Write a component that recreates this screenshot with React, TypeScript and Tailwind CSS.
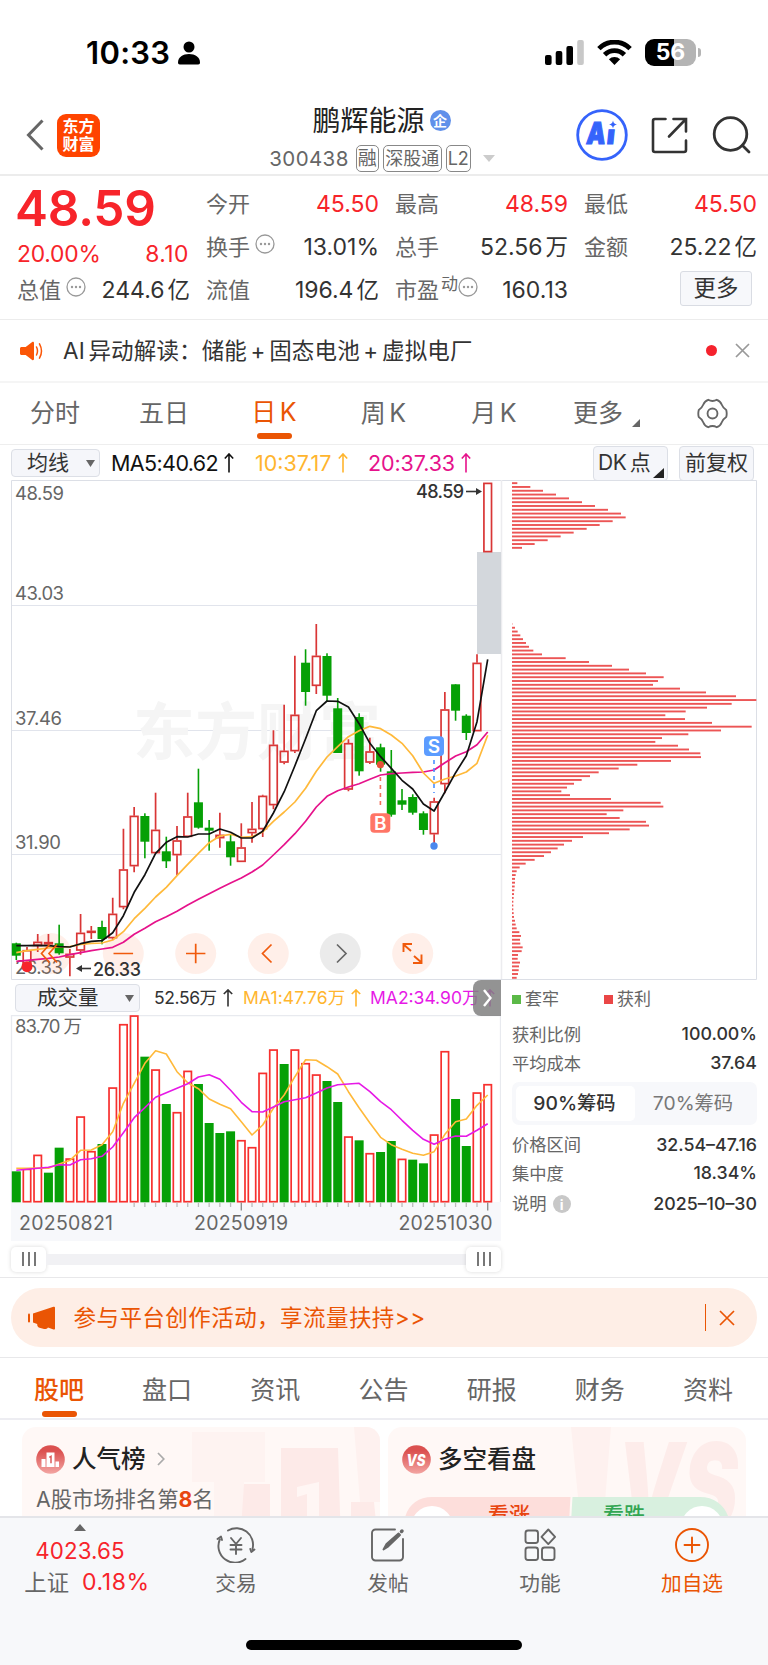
import React from "react";

/* ---------- data ---------- */

type Candle = [up: 0 | 1, high: number, top: number, bottom: number, low: number];

const candles: Candle[] = [
  [0, 942.7, 943.3, 955.7, 960], [1, 947, 950, 967, 967], [1, 934, 941.7, 946, 952], [1, 934, 942, 944.5, 946.7],
  [0, 924.7, 943.3, 953.3, 954.7], [1, 949, 953.7, 957.7, 976.3], [1, 914, 932.7, 950.7, 954.7], [1, 926, 930.7, 933, 939],
  [0, 920.7, 927, 939, 944.3], [1, 897.7, 913.7, 938.3, 940], [1, 828.7, 869.3, 907.3, 909.3], [1, 807, 815.7, 866.3, 872.3],
  [0, 813.3, 816, 841.7, 858.3], [1, 792.7, 829.7, 853.3, 853.3], [0, 836.7, 851.3, 861.3, 868], [1, 826, 840.3, 855.3, 875],
  [1, 792.7, 816.3, 837, 837], [0, 768.7, 802.3, 827.7, 828.7], [0, 820, 827.7, 830.7, 850.7], [1, 812.7, 834.7, 838.3, 847.7],
  [0, 835, 841.3, 857.3, 865.7], [1, 823.3, 847.3, 862, 862], [1, 802, 828.7, 833.3, 842.7], [1, 794.7, 795.7, 829.3, 837],
  [1, 730.3, 744.7, 805.3, 809.3], [1, 704.7, 750.7, 762.7, 764.3], [1, 655.7, 714.7, 751.3, 753], [0, 649.3, 662.7, 692, 705.7],
  [1, 624, 655.7, 686, 694], [0, 653.3, 656, 695.7, 701], [0, 698, 708.3, 753, 753], [1, 739.3, 743, 789.7, 791.3],
  [0, 713.3, 717, 771.3, 775.7], [1, 737.7, 751.3, 762.7, 764], [0, 743.7, 747.3, 764.7, 771.7], [0, 750, 771.3, 814.7, 816.7],
  [0, 789, 800.3, 804.7, 810], [0, 794.3, 797, 812.7, 814.7], [0, 811.3, 813.3, 830, 834.7], [1, 797.7, 801.3, 834.3, 846],
  [1, 692, 709.3, 784.3, 793.3], [0, 684.3, 684.3, 710.7, 720.7], [0, 714.3, 715.7, 733, 740], [1, 654.3, 662.7, 731.3, 731.3],
  [1, 482.7, 482.7, 552.3, 552.3],
];

const ma5 = [945.7, 945.7, 945.3, 945.7, 946.7, 947, 943.7, 941.3, 940.7, 932.7, 915.7, 892.3, 874.7, 853.3, 842.3, 836.7, 837, 834, 834, 829, 832.3, 838, 838, 831.3, 813, 791.7, 765.7, 738.7, 710.7, 701, 701.3, 707, 723.7, 743.3, 756.7, 768.3, 780.3, 789, 804, 811, 792, 772.7, 755.7, 721.7, 659.3];
const ma10 = [952.7, 950.7, 949.3, 948, 947, 946.7, 944.3, 943.3, 943, 940, 931.7, 918.7, 908.3, 897, 887.3, 875.7, 864.3, 853.3, 842.7, 836, 834.3, 837.3, 836.7, 832, 821.3, 812, 802, 788.3, 771.3, 757, 746.7, 736.7, 730.7, 726.3, 728.7, 735, 743.3, 755.7, 773, 783.3, 779, 776, 772, 763.3, 735.3];
const ma20 = [961.3, 960.3, 959.3, 958.3, 957, 954.7, 952.7, 950.7, 949, 947.3, 942.3, 934.3, 928.3, 921.7, 916.7, 911.3, 905, 899.3, 893.7, 888.3, 883, 878, 872, 865, 855, 844.7, 833.7, 821.3, 807, 796.3, 790.7, 787, 783.7, 779.3, 775, 773.7, 773, 772.3, 772, 770, 762.7, 756, 751.7, 744.7, 732];

const volumeUp = [0, 1, 1, 0, 0, 1, 1, 1, 0, 1, 1, 1, 0, 1, 0, 1, 1, 0, 0, 0, 0, 1, 1, 1, 1, 0, 1, 1, 1, 0, 0, 1, 0, 1, 0, 0, 1, 0, 0, 1, 1, 0, 0, 1, 1];
const volumeTop = [589, 582, 540, 593, 518, 551, 425, 529, 507, 338, 148, 122, 245, 284, 387, 412, 288, 327, 444, 474, 469, 496, 517, 294, 224, 267, 224, 265, 299, 318, 381, 485, 496, 535, 531, 498, 552, 554, 565, 479, 229, 372, 513, 353, 328];
const volMa1 = [580, 580, 579, 580, 567, 556, 526, 525, 509, 470, 385, 325, 265, 227, 237, 290, 323, 341, 372, 388, 401, 440, 480, 450, 400, 360, 305, 254, 256, 275, 297, 350, 398, 444, 487, 509, 523, 535, 541, 530, 478, 440, 432, 391, 360];
const volMa2 = [586, 583, 580, 577, 569, 570, 554, 551, 544, 516, 473, 428, 398, 367, 353, 340, 326, 306, 299, 313, 346, 382, 410, 411, 396, 380, 374, 368, 354, 339, 329, 327, 325, 350, 380, 404, 436, 466, 493, 508, 493, 483, 484, 466, 446];

const chipsTop = [16, 55, 93, 132, 171, 210, 249, 288, 327, 341, 302, 263, 224, 185, 146, 107, 68, 30];
const chipsMain = [1, 9, 17, 25, 33, 42, 51, 64, 90, 161, 231, 300, 351, 402, 455, 438, 423, 504, 582, 672, 733, 659, 585, 521, 460, 519, 600, 719, 627, 529, 450, 430, 498, 531, 565, 567, 477, 376, 320, 260, 234, 209, 186, 165, 148, 174, 297, 446, 454, 334, 284, 323, 402, 411, 353, 291, 213, 180, 156, 137, 117, 96, 68, 41, 23, 14, 11, 9, 9, 8, 7, 6, 5, 4, 4, 4, 5, 6, 9, 11, 14, 22, 27, 24, 25, 32, 29, 18, 17, 24, 21, 20, 18, 14];

const cx = (i: number) => 16.3 + i * 10.714;
const line = (ys: number[], f: (y: number) => number = (y) => y) =>
  ys.map((y, i) => `${cx(i).toFixed(1)},${f(y).toFixed(1)}`).join(" ");

/* ---------- small pieces ---------- */

const Dots = ({ className = "" }: { className?: string }) => (
  <svg className={`h-5 w-5 shrink-0 ${className}`} viewBox="0 0 20 20" fill="none" stroke="#999" strokeWidth="1.3">
    <circle cx="10" cy="10" r="9" />
    <g fill="#999" stroke="none">
      <circle cx="6" cy="10" r="1.2" />
      <circle cx="10" cy="10" r="1.2" />
      <circle cx="14" cy="10" r="1.2" />
    </g>
  </svg>
);

const Up = ({ className = "" }: { className?: string }) => (
  <svg className={`h-5 w-2.5 shrink-0 ${className}`} viewBox="0 0 10 20" fill="none" stroke="currentColor" strokeWidth="1.6">
    <path d="M5 19.500V1M0.800 5.500L5 1l4.200 4.500" />
  </svg>
);

const Caret = ({ className = "" }: { className?: string }) => (
  <svg className={`h-[7px] w-[9px] shrink-0 ${className}`} viewBox="0 0 9 7">
    <path d="M0 0h9L4.500 7z" fill="#666" />
  </svg>
);

const Cell = ({ label, value, unit, red, dots }: { label: React.ReactNode; value: string; unit?: string; red?: boolean; dots?: boolean }) => (
  <div className="flex h-[43px] items-center justify-between">
    <span className="flex items-center text-[22px] text-[#666]">
      {label}
      {dots && <Dots className="mb-2 ml-[5px]" />}
    </span>
    <span className={red ? "-mr-px text-[23px] text-[#f7242a]" : "-mr-px text-[23px] text-[#333]"}>
      {value}
      {unit && <span className="ml-[3px] text-[22.5px]">{unit}</span>}
    </span>
  </div>
);

const StatusBar = () => (
  <div className="flex h-[90px] items-start justify-between pl-[86px] pr-[67px] pt-[38px]">
    <div className="flex h-[30px] items-center gap-[8px]">
      <span className="text-[31px] font-semibold tracking-[0.300px] text-black">10:33</span>
      <svg width="22" height="24" viewBox="0 0 22 24">
        <circle cx="11" cy="6" r="5.500" />
        <path d="M0 21.500C0 16 5 13 11 13s11 3 11 8.500c0 1.300-.6 2-1.800 2H1.800C.6 23.500 0 22.800 0 21.500z" />
      </svg>
    </div>
    <div className="-mt-px flex h-[30px] items-center">
      <svg width="39" height="25" viewBox="0 0 39 25">
        <rect x="0" y="15" width="6.600" height="10" rx="2" />
        <rect x="10.700" y="11" width="6.600" height="14" rx="2" />
        <rect x="21.400" y="6" width="6.600" height="19" rx="2" />
        <rect x="32.200" y="0" width="6.600" height="25" rx="2" fill="#c8c8c8" />
      </svg>
      <svg className="ml-[13px]" width="35" height="25" viewBox="0 0 35 25" fill="none" stroke="#000" strokeWidth="4.800">
        <path d="M1.900 8.600a22 22 0 0 1 31.200 0" />
        <path d="M7.600 14.800a14 14 0 0 1 19.800 0" />
        <path d="M17.500 25l-5.600-5.800a8 8 0 0 1 11.200 0z" fill="#000" stroke="none" />
      </svg>
      <div className="ml-[13px] flex h-[27px] w-[51px] items-center justify-center rounded-[9px] bg-[linear-gradient(90deg,#000_57%,#b4b4b4_57%)] text-[23px] font-bold text-white">56</div>
      <div className="ml-[2px] h-[9px] w-[3px] rounded-r-full bg-[#b4b4b4]" />
    </div>
  </div>
);

const Header = () => (
  <div className="flex h-[86px] items-center justify-between border-b-2 border-[#ececec] pl-[26px] pr-[17px] pt-[6px]">
    <div className="flex w-[200px] items-center">
      <svg width="18" height="32" viewBox="0 0 18 32" fill="none" stroke="#666" strokeWidth="3">
        <path d="M16.500 1.500L2.500 16l14 14.500" />
      </svg>
      <div className="ml-[13px] flex h-[43px] w-[43px] flex-col items-center justify-center rounded-[9px] bg-[#ff4400] text-[16px] font-bold leading-[18px] text-white">
        <span>东方</span>
        <span>财富</span>
      </div>
    </div>
    <div className="flex flex-col items-center pr-[17px] pt-[9px]">
      <div className="flex h-[38px] items-center gap-[5px] pl-[3px]">
        <span className="text-[28px] text-[#222]">鹏辉能源</span>
        <span className="flex h-[21px] w-[21px] items-center justify-center rounded-full bg-[#6090ea] text-[14px] font-bold text-white">企</span>
      </div>
      <div className="flex h-[38px] items-center gap-[5px] pl-[4px] text-[20px] leading-[24px] text-[#666]">
        <span className="mr-[2px] text-[20.500px] tracking-[0.400px]">300438</span>
        <span className="flex h-[27px] w-[23px] items-center justify-center rounded-[5px] border border-[#888] text-[19px]">融</span>
        <span className="-ml-px flex h-[27px] w-[59px] items-center justify-center rounded-[5px] border border-[#888] text-[18px]">深股通</span>
        <span className="-ml-px flex h-[27px] w-[25px] items-center justify-center rounded-[5px] border border-[#888] text-[18px]">L2</span>
        <svg className="ml-[7px]" width="12" height="7" viewBox="0 0 12 7">
          <path d="M0 0h12L6 7z" fill="#ccc" />
        </svg>
      </div>
    </div>
    <div className="flex w-[200px] items-center justify-end">
      <svg width="52" height="52" viewBox="0 0 52 52">
        <circle cx="26" cy="26" r="24.300" fill="none" stroke="#3563fb" strokeWidth="2.800" />
        <g fontSize="30" fontWeight="900" fill="#3563fb" stroke="#3563fb" strokeWidth="1.200" transform="translate(3.500 0) skewX(-6)">
          <text x="10" y="35.300" textLength="19" lengthAdjust="spacingAndGlyphs">A</text>
          <text x="30.500" y="35.300" fontSize="26">ı</text>
        </g>
        <path d="M37 11.500c.6 2.600 1.400 3.400 4 4-2.600.6-3.400 1.400-4 4-.6-2.600-1.400-3.400-4-4 2.600-.6 3.400-1.400 4-4z" fill="#3563fb" />
      </svg>
      <svg className="ml-[23px]" width="37" height="37" viewBox="0 0 37 37" fill="none" stroke="#333" strokeWidth="2.600" strokeLinecap="round">
        <path d="M14.500 2H4a2 2 0 0 0-2 2v29a2 2 0 0 0 2 2h29a2 2 0 0 0 2-2V23.500" />
        <path d="M22.500 2H35v12.500M34 3L18 19.500" />
      </svg>
      <svg className="ml-[24px]" width="39" height="38" viewBox="0 0 39 38" fill="none" stroke="#333" strokeWidth="2.800" strokeLinecap="round">
        <circle cx="18.500" cy="18" r="16.300" />
        <path d="M30.500 29.500l6.500 6.500" />
      </svg>
    </div>
  </div>
);

const Quote = () => (
  <div className="flex h-[144px] gap-[17px] border-b border-[#ececec] pl-[17px] pr-[12px] pt-[7px]">
    <div className="w-[172px]">
      <div className="-ml-[2px] flex h-[50px] items-center text-[49.500px] font-semibold tracking-[-0.200px] text-[#f7242a]">48.59</div>
      <div className="flex h-[42px] items-center justify-between text-[22.800px] tracking-[-0.200px] text-[#f7242a]">
        <span>20.00%</span>
        <span className="tracking-[0.500px]">8.10</span>
      </div>
      <div className="-mt-[6px]">
        <Cell label="总值" value="244.6" unit="亿" dots />
      </div>
    </div>
    <div className="w-[172px]">
      <Cell label="今开" value="45.50" red />
      <Cell label="换手" value="13.01%" dots />
      <Cell label="流值" value="196.4" unit="亿" />
    </div>
    <div className="w-[172px]">
      <Cell label="最高" value="48.59" red />
      <Cell label="总手" value="52.56" unit="万" />
      <Cell
        label={<>市盈<span className="mb-3 ml-[2px] text-[17px]">动</span><Dots className="mb-2" /></>}
        value="160.13"
      />
    </div>
    <div className="w-[172px]">
      <Cell label="最低" value="45.50" red />
      <Cell label="金额" value="25.22" unit="亿" />
      <div className="flex h-[38px] items-center justify-end pr-[4px]">
        <span className="flex h-[35px] w-[72px] items-center justify-center rounded-[3px] border border-[#d9dce3] bg-[#f7f8fb] text-[22.500px] text-[#333]">更多</span>
      </div>
    </div>
  </div>
);

const News = () => (
  <div className="flex h-[63px] items-center border-b-2 border-[#f5f5f5] pl-[20px] pr-[18px]">
    <svg width="24" height="20" viewBox="0 0 24 20">
      <path d="M1.500 6h4.200l6.500-5c.8-.6 1.800-.1 1.800.9v16.200c0 1-1 1.500-1.800.9L5.700 14H1.500C.7 14 0 13.400 0 12.500v-5C0 6.600.7 6 1.500 6z" fill="#fb5607" />
      <path d="M16.500 6q2 4 0 8M19.500 2.800q4 7.200 0 14.400" fill="none" stroke="#fb5607" strokeWidth="1.500" strokeLinecap="round" />
    </svg>
    <span className="ml-[19px] text-[22.500px] tracking-[0.150px] [word-spacing:-2.900px] text-[#333]">AI 异动解读：储能 + 固态电池 + 虚拟电厂</span>
    <span className="ml-auto h-[11px] w-[11px] rounded-full bg-[#f5222d]" />
    <svg className="ml-[18px]" width="15" height="15" viewBox="0 0 15 15" stroke="#999" strokeWidth="1.700">
      <path d="M1 1l13 13M14 1L1 14" />
    </svg>
  </div>
);

const PeriodTabs = () => (
  <div className="flex h-[62px] items-center border-b border-[#eee] text-[25px] text-[#666]">
    <span className="w-[109px] pl-[30px]">分时</span>
    <span className="w-[110px] pl-[30px]">五日</span>
    <div className="flex h-full w-[110px] flex-col items-center pt-[11px] text-[#ea5504]">
      <span className="[word-spacing:-3.500px]">日 K</span>
      <span className="mt-px h-[6px] w-[35px] shrink-0 rounded-full bg-[#ea5504]" />
    </div>
    <span className="w-[109px] text-center [word-spacing:-3.500px]">周 K</span>
    <span className="w-[112px] text-center [word-spacing:-3.500px]">月 K</span>
    <span className="flex items-center pl-[23px]">
      更多
      <svg className="ml-[9px] mt-[18px]" width="8" height="8" viewBox="0 0 8 8">
        <path d="M8 0v8H0z" fill="#666" />
      </svg>
    </span>
    <svg className="ml-[57px]" width="31" height="31" viewBox="0 0 30 30" fill="none" stroke="#666" strokeWidth="1.800" strokeLinejoin="round">
      <path d="M10.800 1.700Q15 4.200 19.200 1.700Q22.600 2.900 24 6.500Q25.200 9.600 28.300 11.600Q29.200 15 28.300 18.400Q25.200 20.400 24 23.500Q22.600 27.100 19.200 28.300Q15 25.800 10.800 28.300Q7.400 27.100 6 23.500Q4.800 20.400 1.700 18.400Q0.800 15 1.700 11.600Q4.800 9.600 6 6.500Q7.400 2.900 10.800 1.700z" />
      <circle cx="15" cy="15" r="4.800" />
    </svg>
  </div>
);

const MaRow = () => (
  <div className="flex h-[34px] items-center pl-[11px] pr-[14px] pt-[2px] text-[21.500px]">
    <div className="flex h-[28px] w-[89px] items-center justify-between rounded-[4px] border border-[#dcdfe6] bg-[#f5f6fa] pl-[15px] pr-[4px] text-[21px] text-[#333]">
      均线
      <Caret />
    </div>
    <span className="ml-[11px] flex w-[144px] items-center gap-[6px] text-[#111]"><span className="tracking-[-0.600px]">MA5:40.62</span><Up /></span>
    <span className="flex w-[113px] items-center gap-[6px] text-[#ffb52e]"><span>10:37.17</span><Up /></span>
    <span className="flex items-center gap-[6px] text-[#e6128b]"><span className="tracking-[-0.100px]">20:37.33</span><Up /></span>
    <div className="ml-auto flex h-[35px] w-[75px] items-center rounded-[4px] border border-[#dcdfe6] bg-[#f5f6fa] pl-[4px] text-[#333]">
      <span className="whitespace-nowrap text-[21px] tracking-[-0.300px] [word-spacing:-2.500px]">DK 点</span>
      <svg className="ml-[3px] mt-[20px] shrink-0" width="11" height="10" viewBox="0 0 11 10">
        <path d="M11 0v10H0z" fill="#222" />
      </svg>
    </div>
    <div className="ml-[11px] flex h-[35px] w-[75px] items-center justify-center rounded-[4px] border border-[#dcdfe6] bg-[#f5f6fa] text-[21px] text-[#333]">前复权</div>
  </div>
);

const Bars = ({ values, start }: { values: number[]; start: number }) => (
  <g fill="#ec5555">
    {values.map((v, k) => (
      <rect key={k} x="512" y={482.2 + (k + start) * 3.805} width={v / 3} height="1.900" />
    ))}
  </g>
);

const PriceChart = () => (
  <svg className="block" width="768" height="501" viewBox="0 479 768 501">
    <g stroke="#e1e4ec" strokeWidth="1" fill="none">
      <path d="M11 605.500H501M11 730.500H501M11 854.500H501" />
      <path d="M11.500 480.500H756.500V979.500H11.500z" stroke="#dcdfe6" />
    </g>
    <path d="M501.500 480V979" stroke="#ececef" strokeWidth="1.500" />
    <text x="133" y="755" fontSize="62" fontWeight="700" fill="#f5f5f5">东方财富</text>
    <g fontSize="18.500" fill="#666">
      <text x="15" y="500" textLength="49">48.59</text>
      <text x="15" y="600" textLength="49">43.03</text>
      <text x="15" y="724.500" textLength="47">37.46</text>
      <text x="15" y="849" textLength="46">31.90</text>
      <text x="15" y="974" textLength="48">26.33</text>
    </g>
    <g fill="#ff7033" fillOpacity="0.110">
      <circle cx="51" cy="953.500" r="20.500" />
      <circle cx="123.300" cy="953.500" r="20.500" />
      <circle cx="195.700" cy="953.500" r="20.500" />
      <circle cx="268.300" cy="953.500" r="20.500" />
      <circle cx="412.700" cy="953.500" r="20.500" />
      <circle cx="340.300" cy="953.500" r="20.500" fill="#000" fillOpacity="0.080" />
    </g>
    <rect x="477" y="552" width="24" height="102" fill="#d3d7dc" />
    {candles.map(([up, h, t, b, l], i) =>
      up ? (
        <g key={i} stroke="#d93636" strokeWidth="1.700" fill="none">
          <path d={`M${cx(i)} ${h}V${t}M${cx(i)} ${b}V${l}`} />
          <rect x={cx(i) - 3.8} y={t + 0.7} width="7.600" height={Math.max(b - t - 1.4, 0.8)} />
        </g>
      ) : (
        <g key={i} fill="#06a006">
          <rect x={cx(i) - 0.8} y={h} width="1.600" height={l - h} />
          <rect x={cx(i) - 4.5} y={t} width="9" height={b - t} />
        </g>
      )
    )}
    <g fill="none" strokeWidth="1.700" strokeLinejoin="round">
      <polyline points={line(ma20)} stroke="#e6128b" />
      <polyline points={line(ma10)} stroke="#ffb93a" />
      <polyline points={line(ma5)} stroke="#111" />
    </g>
    <circle cx="27" cy="966.700" r="5.500" fill="#f7242a" />
    <g stroke="#f05a0c" strokeWidth="1.700" fill="none">
      <path d="M49.500 944.500l-8 9 8 9M57 944.500l-8 9 8 9" />
      <path d="M113.500 953.500h19.600M186 953.500h19.400M195.700 943.800v19.400" />
      <path d="M271.500 944.500l-9 9 9 9" />
      <path d="M337 944.500l9 9-9 9" stroke="#666" />
      <path d="M411 951l-8-7M403.500 952v-8h8.500M414 956l8 7M421.500 954.500v8.500h-8.500" strokeWidth="1.900" />
    </g>
    <g strokeWidth="1.600" strokeDasharray="4 4">
      <path d="M380.400 777v32" stroke="#f2705c" />
      <path d="M434 760v33" stroke="#4a90ff" />
    </g>
    <circle cx="380.400" cy="764.700" r="3.600" fill="#e8503a" />
    <circle cx="434" cy="846" r="3.700" fill="#4a88ee" />
    <rect x="370.300" y="813.300" width="20" height="19.500" rx="4" fill="#ff7566" />
    <rect x="424" y="736.300" width="20" height="19.700" rx="4" fill="#5c9cff" />
    <g fontSize="19" fontWeight="600" fill="#fff" textAnchor="middle">
      <text x="380.300" y="830">B</text>
      <text x="434" y="753">S</text>
    </g>
    <g fontSize="18" fontWeight="500" fill="#333">
      <text x="416" y="498" textLength="48">48.59</text>
      <text x="93" y="975.500" textLength="48">26.33</text>
    </g>
    <g stroke="#333" strokeWidth="1.600" fill="#333">
      <path d="M466 491.500h11" />
      <path d="M482 491.500l-6-3.500v7z" strokeWidth="0" />
      <path d="M81 968.500h10" />
      <path d="M76 968.500l6-3.500v7z" strokeWidth="0" />
    </g>
    <Bars values={chipsTop} start={0} />
    <Bars values={chipsMain} start={37} />
  </svg>
);

const vy = (v: number) => 975 + v / 3;

const VolumePanel = () => (
  <div className="w-[501px]">
    <div className="relative flex h-[35px] items-center pl-[15px] pt-px text-[17.500px]">
      <div className="flex h-[28px] w-[125px] items-center justify-between rounded-[4px] border border-[#dcdfe6] bg-[#f5f6fa] pl-[21px] pr-[5px] text-[20.500px] text-[#333]">
        成交量
        <Caret />
      </div>
      <span className="ml-[14px] flex w-[89px] items-center gap-[6px] text-[#333]"><span className="tracking-[-0.400px]">52.56万</span><Up className="scale-y-90" /></span>
      <span className="flex w-[127px] items-center gap-[6px] whitespace-nowrap text-[#ffb52e]"><span className="tracking-[0.100px]">MA1:47.76万</span><Up className="scale-y-90" /></span>
      <span className="flex items-center gap-[6px] whitespace-nowrap text-[#e619e6]"><span>MA2:34.90万</span><Up className="scale-y-90" /></span>
      <div className="absolute right-0 top-0 flex h-[36px] w-[28px] items-center justify-center rounded-l-[8px] bg-[#808080]/85">
        <svg width="9" height="18" viewBox="0 0 9 18" fill="none" stroke="#fff" strokeWidth="2.400">
          <path d="M1 1l6.500 8L1 17" />
        </svg>
      </div>
    </div>
    <svg className="block" width="501" height="226" viewBox="0 1015 501 226">
      <rect x="11" y="1202" width="490" height="39" fill="#f7f8fb" />
      <path d="M11.500 1202V1015.500H500.500V1202" fill="none" stroke="#e8eaef" strokeWidth="1.300" />
      <text x="15" y="1033" fontSize="18.500" fill="#666" textLength="67">83.70 万</text>
      {volumeTop.map((v, i) =>
        volumeUp[i] ? (
          <rect key={i} x={cx(i) - 3.7} y={vy(v) + 0.4} width="7.400" height={1201.3 - vy(v)} fill="#fff" stroke="#f7302e" strokeWidth="1.700" />
        ) : (
          <rect key={i} x={cx(i) - 4.5} y={vy(v)} width="9" height={1202.3 - vy(v)} fill="#06a006" />
        )
      )}
      {volumeTop.map((_, i) =>
        i >= 11 ? <path key={i} d={`M${cx(i)} 1202.500v${i === 21 || i === 44 ? 8 : 4.5}`} stroke={i === 21 || i === 44 ? "#888" : "#bbb"} strokeWidth="1.300" /> : null
      )}
      <g fill="none" strokeWidth="1.600" strokeLinejoin="round">
        <polyline points={line(volMa1, vy)} stroke="#ffb93a" />
        <polyline points={line(volMa2, vy)} stroke="#e619e6" />
      </g>
      <g fontSize="19.500" fill="#666">
        <text x="19" y="1230" textLength="94">20250821</text>
        <text x="194" y="1230" textLength="94">20250919</text>
        <text x="398.500" y="1230" textLength="94">20251030</text>
      </g>
    </svg>
    <div className="flex h-[36px] items-center pl-[11px]">
      <Handle />
      <div className="h-[11px] flex-1 bg-[#f1f1f4]" />
      <Handle />
    </div>
  </div>
);

const Handle = () => (
  <div className="flex h-[25px] w-[35px] items-center justify-center gap-[4px] rounded-[5px] bg-white shadow-[0_0_4px_rgba(0,0,0,0.150)]">
    <span className="h-[14px] w-[2px] bg-[#777]" />
    <span className="h-[14px] w-[2px] bg-[#777]" />
    <span className="h-[14px] w-[2px] bg-[#777]" />
  </div>
);

const Stat = ({ label, value, className }: { label: React.ReactNode; value: string; className: string }) => (
  <div className={`flex items-center justify-between ${className}`}>
    <span className="flex items-center text-[17.300px] text-[#666]">{label}</span>
    <span className="text-[17.800px] font-medium text-[#333]">{value}</span>
  </div>
);

const ChipPanel = () => (
  <div className="ml-[11px] w-[245px] pt-[4px]">
    <div className="flex h-[31px] items-center text-[17px] text-[#666]">
      <span className="h-[9px] w-[9px] bg-[#5bb947]" />
      <span className="ml-[4px] w-[79px]">套牢</span>
      <span className="h-[9px] w-[9px] bg-[#ea4646]" />
      <span className="ml-[4px]">获利</span>
    </div>
    <Stat className="mt-[5px] h-[29px]" label="获利比例" value="100.00%" />
    <Stat className="h-[29px]" label="平均成本" value="37.64" />
    <div className="mt-[4px] flex h-[43px] rounded-[7px] bg-[#f7f8fb] p-[4px] text-[19.300px]">
      <span className="flex w-[119px] items-center justify-center rounded-[5px] bg-white pr-[2px] font-medium text-[#333]">90%筹码</span>
      <span className="flex flex-1 items-center justify-center pr-[2px] text-[#777]">70%筹码</span>
    </div>
    <Stat className="mt-[6px] h-[28px]" label="价格区间" value="32.54–47.16" />
    <Stat className="h-[29px]" label="集中度" value="18.34%" />
    <Stat
      className="h-[32px]"
      label={<>说明<span className="ml-[6px] flex h-[18px] w-[18px] items-center justify-center rounded-full bg-[#c8c8c8] text-[14px] font-bold text-white">i</span></>}
      value="2025–10–30"
    />
  </div>
);

const Banner = () => (
  <div className="h-[81px] border-y-[1.500px] border-[#e8e8ea] px-[11px] pt-[10px]">
    <div className="flex h-[59px] items-center rounded-[30px] bg-[#feeee6] pl-[17px] pr-[22px] text-[#ea5504]">
      <svg width="28" height="24" viewBox="0 0 28 24" fill="#ea5504">
        <rect x="0" y="7.500" width="2" height="9" rx="1" />
        <path d="M5 7.500L25.500 0.800c1-.3 1.500 0 1.500 1v20.600c0 1-.6 1.300-1.500 1L20 21.400c-1 1.400-2.800 2-4.800 1.400l-3.700-1c-1.700-.6-2.500-2-2.300-3.800L5 16.500z" />
      </svg>
      <span className="ml-[17.500px] text-[22.500px] tracking-[0.450px]">参与平台创作活动，享流量扶持&gt;&gt;</span>
      <span className="ml-auto h-[27px] w-[1.500px] bg-[#ea5504]" />
      <svg className="ml-[13px]" width="16" height="16" viewBox="0 0 16 16" stroke="#ea5504" strokeWidth="1.700">
        <path d="M1 1l14 14M15 1L1 15" />
      </svg>
    </div>
  </div>
);

const ContentTabs = () => (
  <div className="flex h-[62px] border-b-2 border-[#ededf2] pl-[5px] text-[25px] text-[#666]">
    <div className="flex w-[108px] flex-col items-center pt-[14px] font-medium text-[#ea5504]">
      <span>股吧</span>
      <span className="mt-px h-[6px] w-[35px] shrink-0 rounded-full bg-[#ea5504]" />
    </div>
    {["盘口", "资讯", "公告", "研报", "财务", "资料"].map((t) => (
      <span key={t} className="w-[108.2px] pt-[14px] text-center">{t}</span>
    ))}
  </div>
);

const Cards = () => (
  <div className="flex h-[96px] gap-[8px] overflow-hidden pl-[22px] pt-[7px]">
    <div className="relative h-[140px] w-[358px] overflow-hidden rounded-[14px] bg-[#fff8f6]">
      <svg className="absolute inset-0" width="358" height="140" viewBox="0 0 358 140">
        <path d="M170 5h73v50h-21v60h-30V55h-22z" fill="#fef3f1" />
        <path d="M332 0h26v75h-20z" fill="#fef1ef" />
        <path d="M222 57h26v60h-30zM259 21h57l3 96h-60zM329 75h23l4 40h-27z" fill="#fdeae8" />
        <path d="M275 60l22-5v50h-12V67l-10 3z" fill="#fff6f4" />
      </svg>
      <div className="relative flex h-[64px] items-center pl-[14px]">
        <svg width="29" height="29" viewBox="0 0 29 29">
          <circle cx="14.500" cy="14.500" r="14.300" fill="url(#badge)" />
          <path d="M5.500 14h4v8h-4zM10.500 7.500h8V22h-8zM19.500 16.500h3.500V22h-3.500z" fill="#fff" />
          <path d="M13.300 12.300l1.700-1v7" stroke="#dc5a58" strokeWidth="1.500" fill="none" />
          <defs>
            <linearGradient id="badge" x1="0" y1="0" x2="0" y2="1">
              <stop offset="0.200" stopColor="#db5150" />
              <stop offset="1" stopColor="#f3a5a2" />
            </linearGradient>
          </defs>
        </svg>
        <span className="ml-[7px] text-[24.500px] font-medium text-[#222]">人气榜</span>
        <svg className="ml-[11px]" width="8" height="14" viewBox="0 0 8 14" fill="none" stroke="#aaa" strokeWidth="1.700">
          <path d="M1 1l5.800 6L1 13" />
        </svg>
      </div>
      <div className="relative -mt-[7px] pl-[14px] text-[21.300px] leading-[30px] text-[#666]">
        A股市场排名第<span className="font-bold text-[#e8450f]">8</span>名
      </div>
    </div>
    <div className="relative h-[140px] w-[358px] overflow-hidden rounded-[14px] bg-[#fff8f6]">
      <svg className="absolute inset-0" width="358" height="140" viewBox="0 0 358 140">
        <path d="M183 0h40l-8 100h-22z" fill="#fef1ef" />
        <text x="229" y="101" fontSize="118" fontWeight="900" fontStyle="italic" fill="#fdecea" textLength="121" lengthAdjust="spacingAndGlyphs">VS</text>
      </svg>
      <div className="relative flex h-[64px] items-center pl-[14px]">
        <svg width="29" height="29" viewBox="0 0 29 29">
          <circle cx="14.500" cy="14.500" r="14.300" fill="url(#badge)" />
          <text x="14" y="20.500" fontSize="16.500" fontWeight="800" fontStyle="italic" fill="#fff" textAnchor="middle" textLength="19" lengthAdjust="spacingAndGlyphs">VS</text>
        </svg>
        <span className="ml-[7px] text-[24.500px] font-medium text-[#222]">多空看盘</span>
      </div>
      <svg className="absolute left-[16px] top-[69px]" width="326" height="60" viewBox="0 0 326 60">
        <path d="M0 30C0 12 12 1 28 1H166.500L163 60H0z" fill="#fddedb" />
        <path d="M168.500 1H296C314 1 326 14 326 32V60H165z" fill="#d8f0df" />
        <circle cx="28" cy="31" r="21" fill="#fff" />
        <circle cx="298" cy="31" r="21" fill="#fff" />
        <text x="84" y="26" fontSize="21" fontWeight="500" fill="#e8450f">看涨</text>
        <text x="199" y="26" fontSize="21" fontWeight="500" fill="#33a653">看跌</text>
      </svg>
    </div>
  </div>
);

const NavItem = ({ label, className = "text-[#666]", children }: { label: string; className?: string; children: React.ReactNode }) => (
  <div className={`flex w-[152px] flex-col items-center pt-[9px] ${className}`}>
    <svg width="40" height="36" viewBox="0 0 40 36" fill="none" stroke="currentColor" strokeWidth="1.900" strokeLinecap="round" strokeLinejoin="round">
      {children}
    </svg>
    <span className="mt-[5px] whitespace-nowrap text-[20.700px] leading-[32px]">{label}</span>
  </div>
);

const BottomBar = () => (
  <div className="h-[149px] border-t-2 border-[#e4e5e9] bg-[#f7f8fa]">
    <div className="flex h-[122px]">
      <div className="flex w-[160px] flex-col items-center pt-[6px] text-[22.300px]">
        <svg width="12" height="7" viewBox="0 0 12 7">
          <path d="M0 7h12L6 0z" fill="#666" />
        </svg>
        <span className="mt-[4px] leading-[32px] tracking-[0.100px] text-[#f7242a]">4023.65</span>
        <span className="flex gap-[13px] leading-[31px] text-[#f7242a]">
          <span className="ml-[14px] text-[#666]">上证</span>
          <span className="text-[23px] tracking-[0.600px]">0.18%</span>
        </span>
      </div>
      <NavItem label="交易">
        <path d="M12 3.500A16.600 16.600 0 0 1 36.500 22M29.500 32A16.600 16.600 0 0 1 3.800 12.500M1.500 12l3.500-2.500 1 3.500M38.500 22.500L35.300 25l-1-3" />
        <path d="M15 11l5 6 5-6M20 17v10M14.500 18h11M14.500 22.500h11" />
      </NavItem>
      <NavItem label="发帖">
        <path d="M27 2.500H7.500a3.500 3.500 0 0 0-3.500 3.500V30a3.500 3.500 0 0 0 3.500 3.500H31.500a3.500 3.500 0 0 0 3.500-3.500V12" />
        <path d="M15.500 22.500l3-5.500L30.500 6.500l1.500 1.500L19.500 20z" fill="currentColor" />
        <path d="M33.500 4.500l.5-.5" strokeWidth="3.500" />
      </NavItem>
      <NavItem label="功能">
        <rect x="5.500" y="3.500" width="12.500" height="12.500" rx="2.500" />
        <rect x="5.500" y="20.500" width="12.500" height="12.500" rx="2.500" />
        <rect x="22" y="20.500" width="12.500" height="12.500" rx="2.500" />
        <path d="M28.300 2.500l6.800 7.300-6.800 7.300-6.800-7.300z" />
      </NavItem>
      <NavItem label="加自选" className="text-[#ea5504]">
        <circle cx="20" cy="18" r="16" />
        <path d="M12.500 18h15M20 10.500v15" />
      </NavItem>
    </div>
    <div className="mx-auto h-[10px] w-[276px] rounded-full bg-black" />
  </div>
);

export default function App() {
  return (
    <div className="h-[1665px] w-[768px] overflow-hidden bg-white font-['Inter','Noto_Sans_CJK_SC',sans-serif]">
      <StatusBar />
      <Header />
      <Quote />
      <News />
      <PeriodTabs />
      <MaRow />
      <PriceChart />
      <div className="flex h-[297px]">
        <VolumePanel />
        <ChipPanel />
      </div>
      <Banner />
      <ContentTabs />
      <Cards />
      <BottomBar />
    </div>
  );
}
